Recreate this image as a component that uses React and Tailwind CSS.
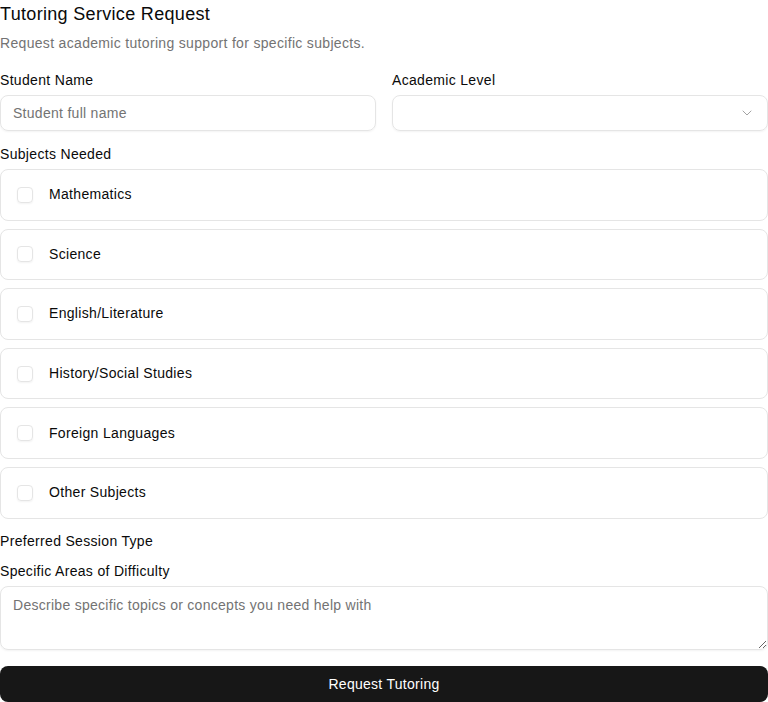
import React from 'react';
import { ChevronDown } from 'lucide-react';

const subjects = [
  'Mathematics',
  'Science',
  'English/Literature',
  'History/Social Studies',
  'Foreign Languages',
  'Other Subjects',
];

export default function App() {
  return (
    <div className="w-[768px] bg-white text-[#0a0a0a] tracking-[0.02em] font-['Liberation_Sans',Arial,sans-serif]">
      {/* Header */}
      <h2 className="text-lg leading-7">Tutoring Service Request</h2>
      <p className="mt-[5px] text-sm leading-5 text-[#737373]">
        Request academic tutoring support for specific subjects.
      </p>

      {/* Name + level */}
      <div className="mt-[17px] grid grid-cols-2 gap-4">
        <div className="flex flex-col">
          <label className="text-sm leading-5">Student Name</label>
          <input
            placeholder="Student full name"
            className="mt-[5px] h-9 rounded-lg border border-[#e5e5e5] px-3 text-sm tracking-[0.02em] placeholder:text-[#737373] shadow-xs outline-none"
          />
        </div>
        <div className="flex flex-col">
          <label className="text-sm leading-5">Academic Level</label>
          <button className="mt-[5px] h-9 rounded-lg border border-[#e5e5e5] px-3 flex items-center justify-end shadow-xs">
            <ChevronDown className="w-4 h-4 text-[#a3a3a3]" strokeWidth={1.5} />
          </button>
        </div>
      </div>

      {/* Subjects */}
      <div className="mt-[13px] text-sm leading-5">Subjects Needed</div>
      <div className="mt-[5px] flex flex-col gap-2">
        {subjects.map((s) => (
          <label
            key={s}
            className="h-[51.6px] flex items-center gap-4 px-4 rounded-lg border border-[#e5e5e5]"
          >
            <span className="w-4 h-4 rounded-[4px] border border-[#e5e5e5] shadow-xs flex-shrink-0" />
            <span className="text-sm leading-5 -mt-[1px]">{s}</span>
          </label>
        ))}
      </div>

      <div className="mt-[12px] text-sm leading-5">Preferred Session Type</div>
      <div className="mt-[10px] text-sm leading-5">Specific Areas of Difficulty</div>
      <textarea
        placeholder="Describe specific topics or concepts you need help with"
        className="mt-[5px] block w-full h-16 rounded-lg border border-[#e5e5e5] px-3 py-2 text-sm leading-5 tracking-[0.02em] placeholder:text-[#737373] shadow-xs outline-none"
      />

      <button className="mt-4 w-full h-9 rounded-lg bg-[#171717] text-white text-sm tracking-[0.02em]">
        Request Tutoring
      </button>
    </div>
  );
}
